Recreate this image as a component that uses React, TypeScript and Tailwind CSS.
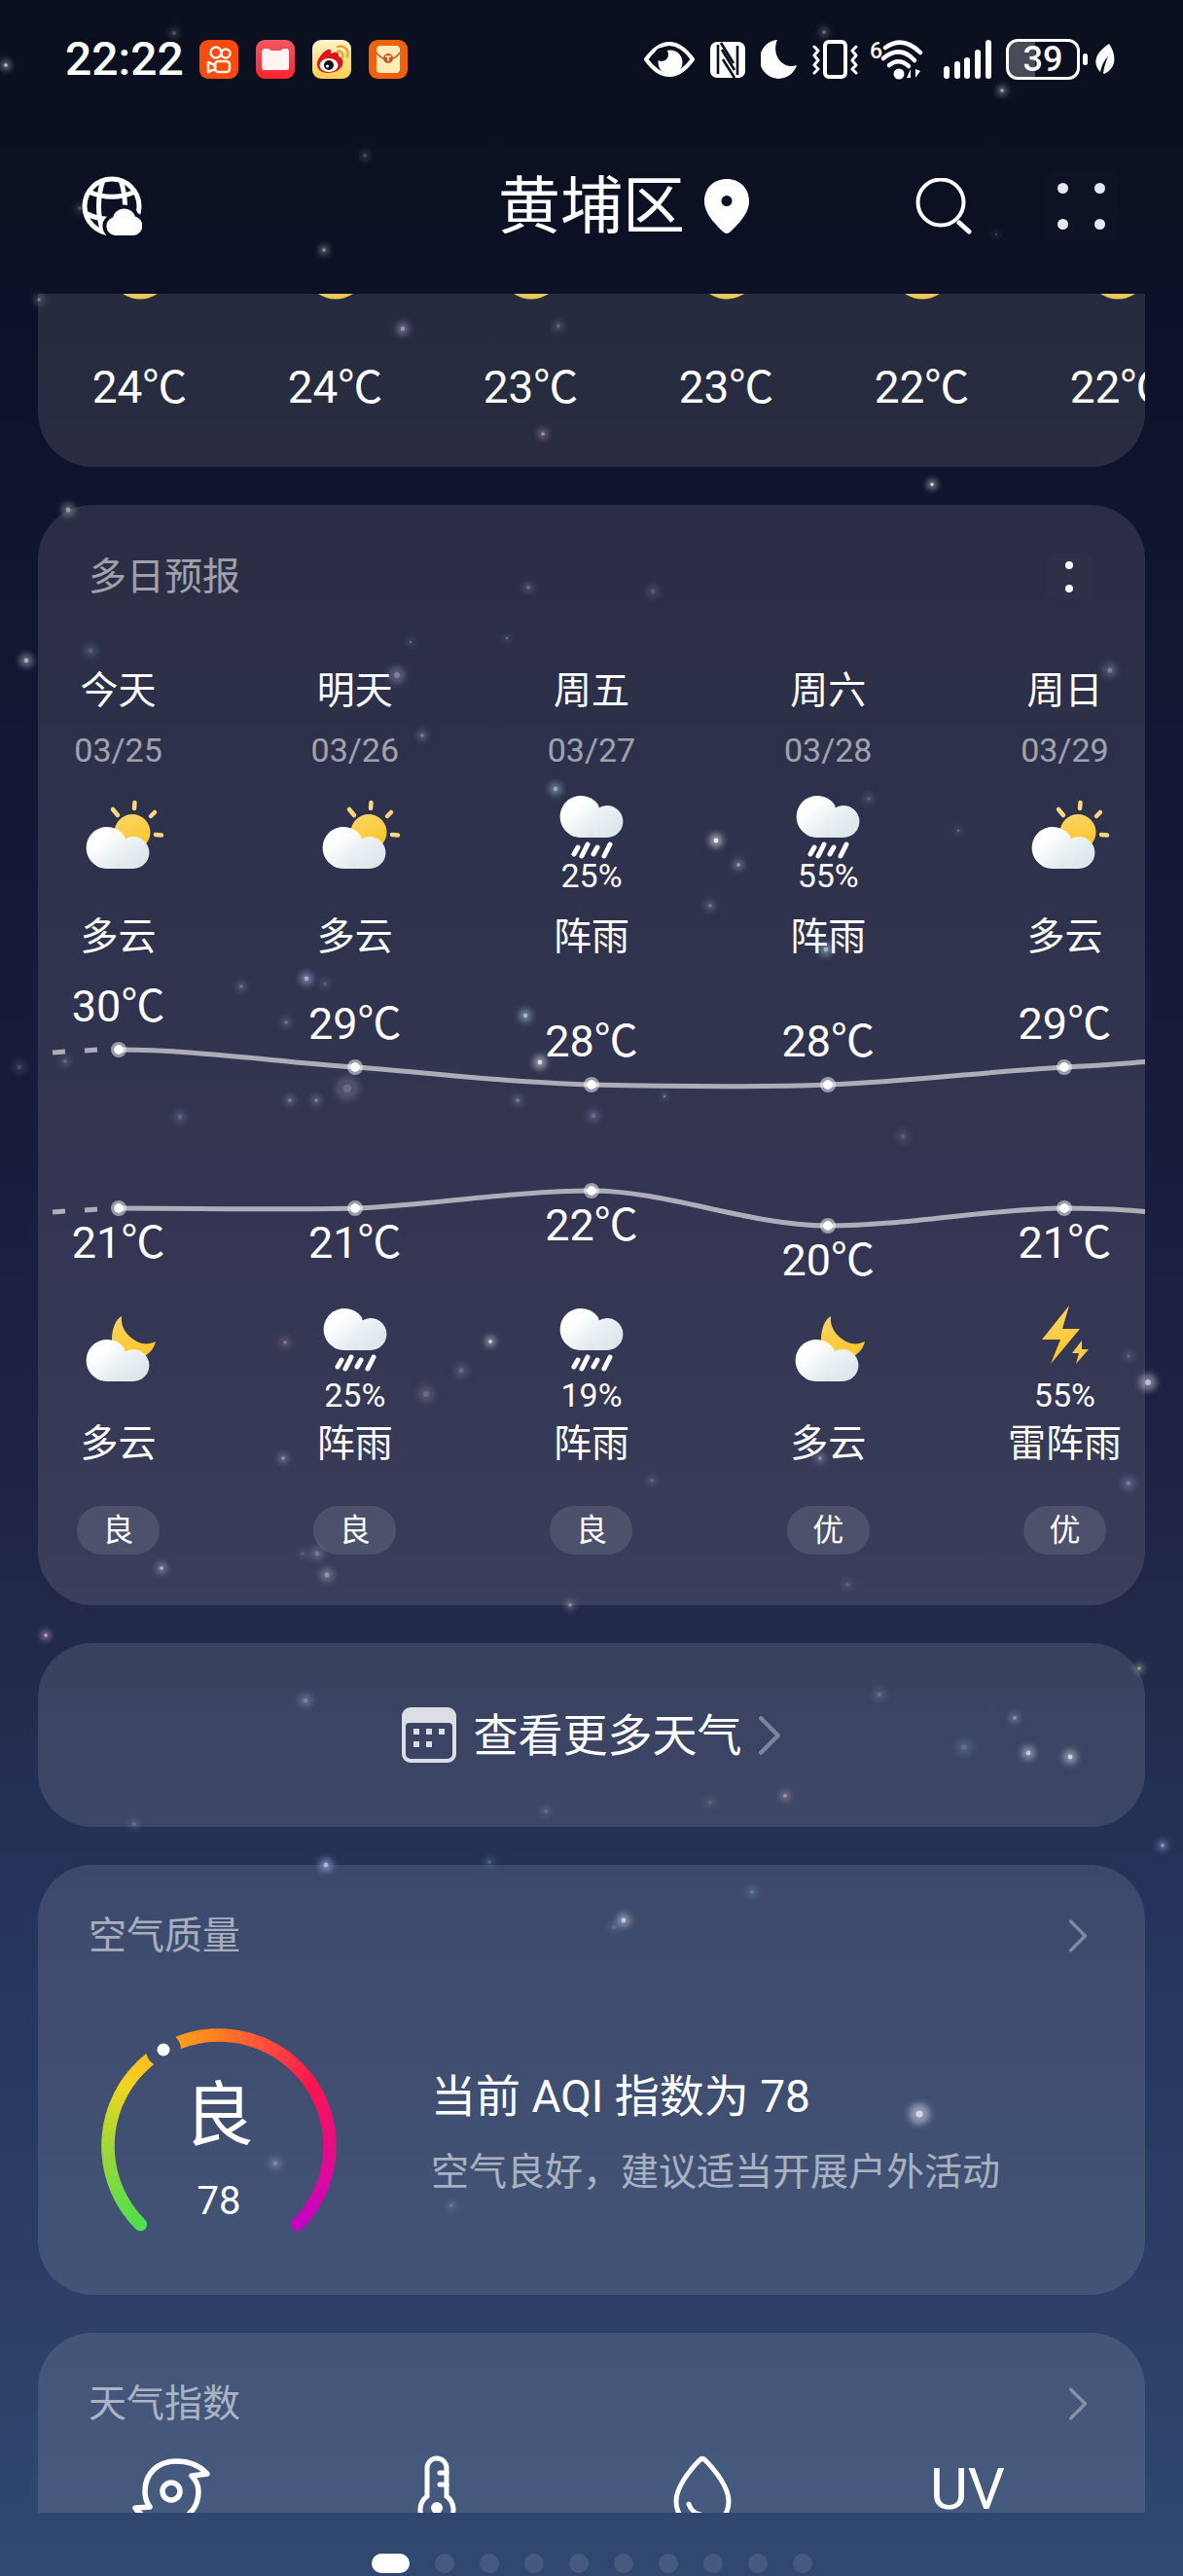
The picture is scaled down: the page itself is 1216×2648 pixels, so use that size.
import { ReactNode } from 'react';

type Weather = 'cloudy-day' | 'cloudy-night' | 'shower' | 'thunder';

interface Period {
  weather: Weather;
  label: string;
  chance?: string;
}

interface Day {
  name: string;
  date: string;
  day: Period;
  night: Period;
  high: number;
  low: number;
  air: string;
}

const hourly = [24, 24, 23, 23, 22, 22];

const days: Day[] = [
  {
    name: '今天',
    date: '03/25',
    day: { weather: 'cloudy-day', label: '多云' },
    night: { weather: 'cloudy-night', label: '多云' },
    high: 30,
    low: 21,
    air: '良',
  },
  {
    name: '明天',
    date: '03/26',
    day: { weather: 'cloudy-day', label: '多云' },
    night: { weather: 'shower', label: '阵雨', chance: '25%' },
    high: 29,
    low: 21,
    air: '良',
  },
  {
    name: '周五',
    date: '03/27',
    day: { weather: 'shower', label: '阵雨', chance: '25%' },
    night: { weather: 'shower', label: '阵雨', chance: '19%' },
    high: 28,
    low: 22,
    air: '良',
  },
  {
    name: '周六',
    date: '03/28',
    day: { weather: 'shower', label: '阵雨', chance: '55%' },
    night: { weather: 'cloudy-night', label: '多云' },
    high: 28,
    low: 20,
    air: '优',
  },
  {
    name: '周日',
    date: '03/29',
    day: { weather: 'cloudy-day', label: '多云' },
    night: { weather: 'thunder', label: '雷阵雨', chance: '55%' },
    high: 29,
    low: 21,
    air: '优',
  },
];

// y of a temperature inside the chart, 18px for each degree
const highY = (t: number) => 79 + (30 - t) * 18;
const lowY = (t: number) => 242 + (21 - t) * 18;

// x, y, core radius, opacity, colour
const stars: [number, number, number, number, string][] = [
  [6, 67, 3, 0.8, '#fff'],
  [179, 34, 3, 0.4, '#cde'],
  [375, 160, 3, 0.35, '#cde'],
  [333, 257, 3, 0.6, '#fff'],
  [82, 214, 3, 0.3, '#fff'],
  [847, 33, 3, 0.5, '#dde'],
  [1030, 93, 3, 0.7, '#fff'],
  [1024, 241, 2, 0.3, '#cde'],
  [40, 308, 3, 0.5, '#cde'],
  [414, 338, 4, 0.7, '#c9c0f5'],
  [574, 335, 3, 0.4, '#cde'],
  [558, 446, 3, 0.7, '#f0c4c8'],
  [958, 498, 3, 0.9, '#fff'],
  [70, 524, 4, 0.6, '#fff'],
  [543, 604, 3, 0.4, '#cde'],
  [671, 608, 4, 0.25, '#cde'],
  [27, 679, 4, 0.7, '#fff'],
  [93, 669, 4, 0.35, '#9cc'],
  [422, 660, 2, 0.4, '#cde'],
  [521, 656, 2, 0.4, '#cde'],
  [408, 694, 5, 0.6, '#bdb4ea'],
  [434, 756, 3, 0.5, '#cde'],
  [571, 811, 4, 0.8, '#9fd0da'],
  [248, 1014, 3, 0.5, '#9cc'],
  [315, 1006, 4, 0.9, '#b9b2f0'],
  [334, 1011, 3, 0.3, '#cde'],
  [294, 1051, 3, 0.4, '#cde'],
  [540, 1044, 4, 0.9, '#9fd0da'],
  [555, 1092, 4, 0.9, '#fff'],
  [67, 1091, 3, 0.35, '#cde'],
  [20, 1097, 4, 0.25, '#cde'],
  [357, 1119, 7, 0.35, '#dde'],
  [298, 1131, 3, 0.5, '#cde'],
  [325, 1131, 3, 0.5, '#cde'],
  [532, 1131, 3, 0.5, '#cde'],
  [185, 1148, 4, 0.4, '#9bd'],
  [1141, 689, 4, 0.5, '#cde'],
  [736, 864, 4, 1, '#fff'],
  [759, 889, 3, 0.6, '#fff'],
  [730, 931, 3, 0.5, '#cde'],
  [893, 821, 3, 0.4, '#9bd'],
  [985, 854, 2, 0.4, '#cde'],
  [849, 976, 4, 0.9, '#9fd0da'],
  [683, 1127, 2, 0.5, '#cde'],
  [610, 1147, 4, 0.4, '#cbe'],
  [928, 1168, 4, 0.25, '#cde'],
  [293, 1380, 3, 0.5, '#ebc'],
  [504, 1379, 3, 0.9, '#fff'],
  [474, 1409, 4, 0.4, '#9bd'],
  [438, 1433, 5, 0.4, '#caa8c0'],
  [291, 1499, 3, 0.6, '#dde'],
  [311, 1597, 3, 0.3, '#8b9'],
  [326, 1597, 4, 0.5, '#b9b2f0'],
  [166, 1612, 3, 0.8, '#dde'],
  [336, 1619, 4, 0.6, '#dde'],
  [586, 1650, 3, 0.6, '#dde'],
  [47, 1681, 3, 0.9, '#f3b8dc'],
  [1160, 1394, 3, 0.3, '#cde'],
  [1180, 1421, 5, 0.9, '#dde'],
  [843, 1499, 3, 0.6, '#dde'],
  [1160, 1525, 4, 0.5, '#b9b2f0'],
  [670, 1522, 3, 0.3, '#cde'],
  [871, 1629, 3, 0.3, '#9cc'],
  [1171, 1715, 3, 0.8, '#a9d9a9'],
  [314, 1748, 4, 0.6, '#9bd'],
  [904, 1742, 4, 0.35, '#9bd'],
  [1043, 1766, 3, 0.6, '#cde'],
  [991, 1796, 5, 0.35, '#9bd'],
  [1057, 1802, 4, 0.9, '#dde'],
  [1100, 1806, 4, 1, '#dde'],
  [807, 1846, 3, 0.7, '#f0c4c8'],
  [730, 1853, 3, 0.3, '#db9'],
  [561, 1862, 3, 0.3, '#cde'],
  [138, 1875, 3, 0.3, '#cde'],
  [1195, 1897, 3, 0.8, '#b8c8ff'],
  [335, 1917, 4, 0.9, '#c4c8ff'],
  [503, 1914, 3, 0.4, '#9bd'],
  [773, 1945, 3, 0.5, '#9cc'],
  [641, 1974, 4, 0.9, '#dde'],
  [631, 1981, 3, 0.4, '#9bd'],
  [945, 2173, 6, 1, '#dde'],
  [283, 2224, 4, 0.4, '#dde'],
  [464, 2267, 3, 0.3, '#cde'],
];

// position on the AQI arc (degrees from its start) and colour
const aqiStops: [number, number[]][] = [
  [0, [80, 222, 80]],
  [45, [165, 215, 54]],
  [75, [240, 214, 32]],
  [97, [255, 186, 34]],
  [118, [255, 150, 34]],
  [136, [255, 120, 34]],
  [162, [255, 70, 64]],
  [190, [255, 20, 80]],
  [215, [236, 14, 120]],
  [245, [214, 10, 165]],
  [270, [196, 0, 200]],
];

function aqiColor(deg: number) {
  let i = 0;
  while (i < aqiStops.length - 2 && deg > aqiStops[i + 1][0]) i++;
  const [a, from] = aqiStops[i];
  const [b, to] = aqiStops[i + 1];
  const k = Math.min(1, (deg - a) / (b - a));
  return `rgb(${from.map((c, n) => Math.round(c + (to[n] - c) * k)).join(',')})`;
}

function aqiPoint(deg: number) {
  const rad = ((135 + deg) * Math.PI) / 180;
  return `${122 + 114 * Math.cos(rad)} ${122 + 114 * Math.sin(rad)}`;
}

function StarField() {
  return (
    <svg
      className="pointer-events-none absolute inset-0 h-full w-full"
      viewBox="0 0 1216 2648"
      preserveAspectRatio="xMidYMin slice"
      aria-hidden="true"
    >
      <defs>
        <filter id="halo" x="-100%" y="-100%" width="300%" height="300%">
          <feGaussianBlur stdDeviation="3" />
        </filter>
      </defs>
      {stars.map(([x, y, r, opacity, color]) => (
        <g key={`${x}-${y}`} opacity={opacity} fill={color}>
          <circle cx={x} cy={y} r={r * 1.8} opacity="0.5" filter="url(#halo)" />
          <circle cx={x} cy={y} r={r * 0.6} opacity="0.85" />
        </g>
      ))}
    </svg>
  );
}

function AppBadges() {
  return (
    <div className="flex gap-[18px]">
      <svg className="h-10 w-10" viewBox="0 0 40 40">
        <rect width="40" height="40" rx="9" fill="#fa4b0e" />
        <g fill="none" stroke="#fff3e4" strokeWidth="2.6">
          <circle cx="17" cy="13" r="5.5" />
          <circle cx="27" cy="14" r="4.5" />
          <rect x="16" y="22" width="15" height="11" rx="3.5" />
          <path d="M9 23l7 3v4l-7 3z" strokeLinejoin="round" />
        </g>
      </svg>
      <svg className="h-10 w-10" viewBox="0 0 40 40">
        <defs>
          <linearGradient id="red" x2="0" y2="1">
            <stop stopColor="#f4575f" />
            <stop offset="1" stopColor="#f8252f" />
          </linearGradient>
        </defs>
        <rect width="40" height="40" rx="9" fill="url(#red)" />
        <path
          d="M8 9h5l3 2h9l3-2h5l1 3v17q0 2-3 2H9q-3 0-3-3V12z"
          fill="#fff3f3"
        />
      </svg>
      <svg className="h-10 w-10" viewBox="0 0 40 40">
        <defs>
          <linearGradient id="gold" x2="0" y2="1">
            <stop stopColor="#fdf3cf" />
            <stop offset="1" stopColor="#fbcf48" />
          </linearGradient>
        </defs>
        <rect width="40" height="40" rx="9" fill="url(#gold)" />
        <path
          d="M5 25c0-6 7-14 11-15 3-1 4 1 3 4 5-2 9-2 8 3 5 2 5 6 4 9-2 5-9 8-15 8-7 0-11-4-11-9z"
          fill="#d8161c"
        />
        <ellipse cx="17" cy="26" rx="9.5" ry="7" fill="#fff" />
        <circle cx="17" cy="26" r="5" fill="#111" />
        <circle cx="15.5" cy="27" r="1.6" fill="#fff" />
        <path
          d="M26 12c4-1 6 2 5 6M26 7c8-2 12 4 10 10"
          fill="none"
          stroke="#eda32c"
          strokeWidth="2.4"
          strokeLinecap="round"
        />
      </svg>
      <svg className="h-10 w-10" viewBox="0 0 40 40">
        <rect width="40" height="40" rx="9" fill="#f0600f" />
        <rect x="8" y="6" width="24" height="28" rx="4" fill="#fdebb8" />
        <path
          d="M8 13c4 6 8 7 12 7s8-1 12-7"
          fill="none"
          stroke="#b5672c"
          strokeWidth="1.5"
        />
        <circle cx="20" cy="19" r="5" fill="#c2562a" />
        <path d="M17 17h6M20 17v5" stroke="#fdebb8" strokeWidth="1.5" />
      </svg>
    </div>
  );
}

function StatusBar() {
  return (
    <div className="flex h-[122px] items-center pr-[70px] pl-[67px]">
      <time className="text-[48px] leading-[60px] font-medium">22:22</time>
      <div className="ml-4">
        <AppBadges />
      </div>
      <div className="ml-auto flex items-center">
        <svg className="h-9 w-[52px]" viewBox="0 0 52 36">
          <path
            d="M2 18C10 7 18 2 26 2s16 5 24 16C42 29 34 34 26 34S10 29 2 18z"
            fill="none"
            stroke="#fff"
            strokeWidth="4"
          />
          <circle cx="27" cy="21" r="12.5" fill="#fff" />
          <circle cx="18" cy="13" r="7" fill="#0a0f1f" />
        </svg>
        <svg className="ml-4 h-[37px] w-9" viewBox="0 0 36 37">
          <rect width="36" height="37" rx="7" fill="#fff" />
          <path
            d="M8 33L8 3M28 34L28 4M12 8L25 29M13 18L25 37M11 1L24 22"
            fill="none"
            stroke="#0a0f1f"
            strokeWidth="2.6"
          />
        </svg>
        <svg className="ml-4 h-10 w-[37px]" viewBox="0 0 37 40">
          <path d="M17 0A19.5 20 0 1 0 37 26C24 31 10 17 17 0z" fill="#fff" />
        </svg>
        <svg
          className="ml-4 h-10 w-[47px]"
          viewBox="0 0 47 40"
          fill="none"
          stroke="#fff"
        >
          <rect x="13" y="2" width="21" height="36" rx="4" strokeWidth="4" />
          <path
            d="M2 7l4 4-4 5 4 5-4 5 4 4-4 4M45 7l-4 4 4 5-4 5 4 5-4 4 4 4"
            strokeWidth="3"
            strokeLinecap="round"
            strokeLinejoin="round"
          />
        </svg>
        <svg className="ml-3 h-[42px] w-14" viewBox="0 0 56 42">
          <text x="0" y="20" fontSize="23" fontWeight="500" fill="#fff">
            6
          </text>
          <g
            fill="none"
            stroke="#fff"
            strokeWidth="4.5"
            strokeLinecap="round"
          >
            <path d="M16 9q18-13 36 5" />
            <path d="M14 20q17-14 32 2" />
            <path d="M20 27q10-8 20 1" />
          </g>
          <circle cx="30" cy="36" r="5.5" fill="#fff" />
          <path d="M42 31v9h-4zM47 40v-9l5 2zM45 31v9" fill="#fff" />
        </svg>
        <svg className="ml-5 h-10 w-[49px]" viewBox="0 0 49 40" fill="#fff">
          <rect x="0" y="27" width="6" height="13" rx="3" />
          <rect x="11" y="22" width="6" height="18" rx="3" />
          <rect x="21" y="18" width="6" height="22" rx="3" />
          <rect x="32" y="10" width="6" height="30" rx="3" />
          <rect x="43" y="0" width="6" height="40" rx="3" />
        </svg>
        <div className="relative ml-[15px] h-[42px] w-[76px] overflow-hidden rounded-xl border-3 border-white text-center text-[36px] leading-[37px] font-medium">
          <div className="absolute inset-y-0 left-0 w-[39%] bg-white/25" />
          <span className="relative">39</span>
        </div>
        <div className="ml-[3px] h-3 w-[5px] rounded-sm bg-white" />
        <svg className="ml-2 h-8 w-5" viewBox="0 0 20 32">
          <path
            d="M14 0c7 10 9 24-5 31l-1-1c1-7 3-12 5-17C9 17 6 23 5 29-3 20-1 10 14 0z"
            fill="#fff"
          />
        </svg>
      </div>
    </div>
  );
}

function TitleBar() {
  return (
    <header className="grid h-[180px] grid-cols-[1fr_auto_1fr] items-center px-[67px]">
      <button type="button" aria-label="天气地图" className="ml-[17px] w-[62px]">
        <svg className="h-[62px] w-[62px]" viewBox="0 0 62 62">
          <g fill="none" stroke="#fff" strokeWidth="5">
            <circle cx="31" cy="31" r="28" />
            <path d="M22 4c-6 18-6 36 0 54M40 4c6 18 6 36 0 54M7 16c16 7 32 7 48 0M4 38c10 6 20 7 30 6" />
          </g>
          <path
            d="M34 61a9.5 9.5 0 0 1-2-18.5 12 12 0 0 1 23-1A10 10 0 0 1 54 61z"
            fill="#fff"
            stroke="#0b1022"
            strokeWidth="8"
            paintOrder="stroke"
          />
        </svg>
      </button>
      <h1 className="pt-[2px] text-[64px] leading-[76px]">黄埔区</h1>
      <div className="flex items-center">
        <svg className="ml-5 h-14 w-[46px]" viewBox="0 0 46 56">
          <path
            fillRule="evenodd"
            d="M23 0C10 0 0 9 0 23c0 13 12 24 19 31q4 4 8 0c7-7 19-18 19-31C46 9 36 0 23 0zm0 17a5.5 5.5 0 1 1 0 11 5.5 5.5 0 0 1 0-11z"
            fill="#fff"
          />
        </svg>
        <button type="button" aria-label="搜索" className="ml-auto">
          <svg
            className="h-[58px] w-[58px]"
            viewBox="0 0 58 58"
            fill="none"
            stroke="#fff"
            strokeWidth="4"
            strokeLinecap="round"
          >
            <circle cx="26" cy="25" r="23.5" />
            <path d="M45 46l10 9" strokeWidth="5" />
          </svg>
        </button>
        <button
          type="button"
          aria-label="更多"
          className="ml-[74px] grid h-[76px] w-[76px] grid-cols-2 place-content-center justify-items-center gap-x-0 gap-y-[26px] rounded-lg bg-white/[0.01]"
        >
          <span className="h-[11px] w-[11px] rounded-full bg-[#e6e8f0]" />
          <span className="h-[11px] w-[11px] rounded-full bg-[#e6e8f0]" />
          <span className="h-[11px] w-[11px] rounded-full bg-[#e6e8f0]" />
          <span className="h-[11px] w-[11px] rounded-full bg-[#e6e8f0]" />
        </button>
      </div>
    </header>
  );
}

function Cloud() {
  return (
    <>
      <path
        d="M36 81a21.5 21.5 0 1 1 18-33.5L63 81z"
        fill="url(#cloud-left)"
      />
      <path
        d="M50 81L47 60a16.500 16.500 0 1 1 16 21z"
        fill="url(#cloud-right)"
      />
    </>
  );
}

function WeatherIcon({ weather }: { weather: Weather }) {
  if (weather === 'shower') {
    return (
      <svg className="h-[74px] w-24" viewBox="0 0 96 74">
        <g transform="translate(1 -32)">
          <Cloud />
        </g>
        <path
          d="M34 59l-4 7M44 56l-6 12M54 59l-4 7M67 56l-6 12"
          stroke="#fff"
          strokeWidth="5"
          strokeLinecap="round"
        />
      </svg>
    );
  }
  if (weather === 'thunder') {
    return (
      <svg className="h-[74px] w-24" viewBox="0 0 96 74" fill="url(#sun)">
        <path d="M53 3L25 38h19L34 63l30-36H46z" />
        <path d="M66 39L56 52h7l-3 11 13-15h-7z" />
      </svg>
    );
  }
  return (
    <svg className="h-[84px] w-24" viewBox="0 0 96 84">
      {weather === 'cloudy-day' ? (
        <>
          <circle cx="62" cy="43.5" r="18.5" fill="url(#sun)" />
          <path
            d="M64.5 13l-.5 6M42 20l5 6M85 23l-4 4M86 46l6 .5"
            stroke="#f8d77e"
            strokeWidth="4.5"
            strokeLinecap="round"
          />
        </>
      ) : (
        <path
          d="M51 14c-6 3-10 13-10 24 0 14 11 22 25 20 12-2 18-10 20-18-8 4-17 3-24-3-8-6-12-14-11-23z"
          fill="url(#sun)"
        />
      )}
      <Cloud />
    </svg>
  );
}

// gradients shared by all weather icons
function IconDefs() {
  return (
    <svg className="absolute h-0 w-0" aria-hidden="true">
      <defs>
        <linearGradient id="cloud-left" x2="1" y2="1">
          <stop offset="0.3" stopColor="#ffffff" />
          <stop offset="1" stopColor="#d3e1e6" />
        </linearGradient>
        <linearGradient id="cloud-right" x2="0.8" y2="1">
          <stop stopColor="#f3f6f8" />
          <stop offset="1" stopColor="#d8e5ea" />
        </linearGradient>
        <linearGradient id="sun" x2="0.3" y2="1">
          <stop stopColor="#f8d668" />
          <stop offset="1" stopColor="#ffc629" />
        </linearGradient>
      </defs>
    </svg>
  );
}

function Chevron({ className }: { className: string }) {
  return (
    <svg
      className={className}
      viewBox="0 0 24 40"
      fill="none"
      stroke="#fff"
      strokeOpacity="0.35"
      strokeWidth="4"
      strokeLinecap="round"
      strokeLinejoin="round"
    >
      <path d="M3 3l17 17L3 37" />
    </svg>
  );
}

function CardHeader({ title, children }: { title: string; children: ReactNode }) {
  return (
    <div className="flex h-14 items-center justify-between pr-[54px] pl-[52px]">
      <h2 className="text-[39px] leading-[56px] text-white/55">{title}</h2>
      {children}
    </div>
  );
}

function HourlyCard() {
  return (
    <section className="overflow-hidden rounded-b-[56px] bg-white/[0.11] pb-[54px]">
      <ul className="flex pl-1">
        {hourly.map((temp, i) => (
          <li key={i} className="flex w-[201px] shrink-0 flex-col items-center">
            <svg className="h-[6px] w-9" viewBox="0 0 36 6">
              <path d="M0 0Q18 11 36 0z" fill="#ecc858" />
            </svg>
            <span className="mt-[62px] text-[46px] leading-[56px]">{temp}℃</span>
          </li>
        ))}
      </ul>
    </section>
  );
}

function TemperatureChart() {
  return (
    <div className="relative mt-[13px] h-[330px]">
      <svg
        className="absolute inset-0 h-full w-full"
        viewBox="0 0 1216 330"
        preserveAspectRatio="none"
        fill="none"
        stroke="#fff"
        strokeOpacity="0.6"
        strokeWidth="5"
      >
        <path d="M54 82l13-1M87 80l13-1" />
        <path d="M122 79C200 79 280 91 365 97S520 113 608 115S770 118 851 115S1020 101 1094 97S1150 93 1216 89" />
        <path d="M54 246l13-1M87 244l13-1" />
        <path d="M122 242C200 242 300 244 365 242S530 224 608 224S770 260 851 260S1020 242 1094 242S1150 245 1216 248" />
      </svg>
      <div className="relative grid grid-cols-5">
        {days.map((day) => (
          <div
            key={day.date}
            className="flex flex-col items-center text-[45px] leading-[56px]"
            style={{ paddingTop: highY(day.high) - 72 }}
          >
            <span>{day.high}℃</span>
            <span className="mt-2 h-4 w-4 rounded-full border-3 border-white/50 bg-white bg-clip-padding" />
            <span
              className="h-4 w-4 rounded-full border-3 border-white/50 bg-white bg-clip-padding"
              style={{ marginTop: lowY(day.low) - highY(day.high) - 16 }}
            />
            <span>{day.low}℃</span>
          </div>
        ))}
      </div>
    </div>
  );
}

function DailyCard() {
  return (
    <section className="overflow-hidden rounded-[56px] bg-white/[0.11] pt-[46px] pb-[52px]">
      <CardHeader title="多日预报">
        <button
          type="button"
          aria-label="多日预报选项"
          className="flex h-12 w-12 flex-col items-center justify-center gap-4 rounded-lg bg-white/[0.01]"
        >
          <span className="h-2 w-2 rounded-full bg-white" />
          <span className="h-2 w-2 rounded-full bg-white" />
        </button>
      </CardHeader>
      {/* the strip is as wide as the screen and is cut off by the card */}
      <div className="-mx-[39px] mt-[65px]">
        <div className="grid grid-cols-5">
          {days.map((day) => (
            <div
              key={day.date}
              className="flex flex-col items-center text-[39px] leading-[48px]"
            >
              <span>{day.name}</span>
              <span className="mt-[17px] text-[34px] leading-10 text-white/55">
                {day.date}
              </span>
              <div className="mt-[21px] flex h-[102px] flex-col items-center">
                <WeatherIcon weather={day.day.weather} />
                {day.day.chance && (
                  <span className="text-[34px] leading-7">{day.day.chance}</span>
                )}
              </div>
              <span className="mt-[25px]">{day.day.label}</span>
            </div>
          ))}
        </div>
        <TemperatureChart />
        <div className="mt-[9px] grid grid-cols-5">
          {days.map((day) => (
            <div
              key={day.date}
              className="flex flex-col items-center text-[39px] leading-[48px]"
            >
              <div className="flex h-[110px] flex-col items-center">
                <WeatherIcon weather={day.night.weather} />
                {day.night.chance && (
                  <span className="mt-[7px] text-[34px] leading-7">
                    {day.night.chance}
                  </span>
                )}
              </div>
              <span className="mt-[11px]">{day.night.label}</span>
              <span className="mt-10 w-[85px] rounded-full bg-white/[0.11] text-center text-[32px] leading-[50px]">
                {day.air}
              </span>
            </div>
          ))}
        </div>
      </div>
    </section>
  );
}

function MoreWeatherButton() {
  return (
    <button
      type="button"
      className="flex h-[189px] w-full items-center justify-center rounded-[56px] bg-white/[0.11]"
    >
      <svg className="h-[57px] w-14" viewBox="0 0 56 57" fill="#dcdde6">
        <path
          fillRule="evenodd"
          d="M9 0h38a9 9 0 0 1 9 9v39a9 9 0 0 1-9 9H9a9 9 0 0 1-9-9V9a9 9 0 0 1 9-9zM4 20v28a5 5 0 0 0 5 5h38a5 5 0 0 0 5-5V20a4 4 0 0 0-4-4H8a4 4 0 0 0-4 4z"
        />
        <path d="M12 22h6v6h-6zM25 22h6v6h-6zM38 22h6v6h-6zM12 35h6v6h-6zM25 35h6v6h-6z" />
      </svg>
      <span className="mr-4 ml-[18px] text-[46px] leading-[56px]">
        查看更多天气
      </span>
      <Chevron className="h-[42px] w-[25px]" />
    </button>
  );
}

function AirGauge() {
  const segments: number[] = [];
  for (let deg = 0; deg < 270; deg += 3) {
    segments.push(deg);
  }

  return (
    <div className="relative h-[244px] w-[244px]">
      <svg className="absolute inset-0 h-full w-full" viewBox="0 0 244 244">
        <defs>
          <mask id="marker-gap">
            <rect width="244" height="244" fill="#fff" />
            <circle cx="65" cy="23" r="18" fill="#000" />
          </mask>
        </defs>
        <g fill="none" strokeWidth="13.5" mask="url(#marker-gap)">
          {segments.map((deg) => (
            <path
              key={deg}
              d={`M${aqiPoint(deg)}A114 114 0 0 1 ${aqiPoint(Math.min(270, deg + 3.5))}`}
              stroke={aqiColor(deg)}
              strokeLinecap={deg === 0 || deg === 267 ? 'round' : 'butt'}
            />
          ))}
        </g>
        <circle cx="65" cy="23" r="6.5" fill="#fff" />
      </svg>
      <div className="relative flex flex-col items-center pt-[47px]">
        <span className="text-[72px] leading-[88px]">良</span>
        <span className="mt-5 text-[40px] leading-12">78</span>
      </div>
    </div>
  );
}

function AirQualityCard() {
  return (
    <section className="rounded-[56px] bg-white/[0.11] pt-[45px] pb-[31px]">
      <CardHeader title="空气质量">
        <Chevron className="mr-1 h-9 w-[21px]" />
      </CardHeader>
      <div className="mt-[66px] flex pl-16">
        <AirGauge />
        <div className="ml-24 pt-[43px]">
          <p className="text-[46px] leading-[56px]">当前 AQI 指数为 78</p>
          <p className="mt-[22px] text-[39px] leading-[56px] text-white/55">
            空气良好，建议适当开展户外活动
          </p>
        </div>
      </div>
    </section>
  );
}

function IndexCard() {
  return (
    <section className="h-[185px] overflow-hidden rounded-t-[56px] bg-white/[0.11] pt-[45px]">
      <CardHeader title="天气指数">
        <Chevron className="mr-1 h-9 w-[21px]" />
      </CardHeader>
      <div className="mt-6 grid grid-cols-4 justify-items-center pr-[46px]">
        <svg
          className="h-[84px] w-[84px]"
          viewBox="0 0 84 84"
          fill="none"
          stroke="#fff"
          strokeWidth="5.5"
          strokeLinejoin="round"
        >
          <path d="M79 20C70 10 58 7 47 7 28 7 15 20 15 38c0 7 2 12 5 16L5 55c9 12 20 15 31 15 20 0 34-13 34-32 0-7-3-12-7-16z" />
          <circle cx="42" cy="38" r="9" />
        </svg>
        <svg
          className="h-[84px] w-12"
          viewBox="0 0 48 84"
          fill="none"
          stroke="#fff"
          strokeWidth="5"
          strokeLinecap="round"
        >
          <path d="M14 43V14a10 10 0 0 1 20 0v29a17 17 0 1 1-20 0z" />
          <path d="M27 19h7M27 31h7" />
          <circle cx="24" cy="55" r="6" fill="#fff" stroke="none" />
        </svg>
        <svg
          className="h-[84px] w-[68px]"
          viewBox="0 0 68 84"
          fill="none"
          stroke="#fff"
          strokeWidth="5"
          strokeLinecap="round"
        >
          <path d="M31 6q3-3 6 0c10 10 24 28 24 42 0 16-12 26-27 26S7 64 7 48C7 34 21 16 31 6z" />
          <path d="M20 51c2 6 5 9 12 11" />
        </svg>
        <span className="text-[60px] leading-[72px]">UV</span>
      </div>
    </section>
  );
}

function PageDots() {
  return (
    <nav
      aria-label="城市"
      className="flex justify-center gap-[26px] pt-[42px] pb-[2px]"
    >
      <button
        type="button"
        aria-label="城市 1"
        className="h-5 w-[39px] rounded-full bg-white"
      />
      {[2, 3, 4, 5, 6, 7, 8, 9, 10].map((n) => (
        <button
          key={n}
          type="button"
          aria-label={`城市 ${n}`}
          className="h-5 w-5 rounded-full bg-white/10"
        />
      ))}
    </nav>
  );
}

export default function App() {
  return (
    <div className="relative min-h-screen overflow-hidden bg-[linear-gradient(180deg,#0a0f1e_0%,#0b1122_8%,#0d1128_12%,#10142c_20%,#141835_30%,#1a1c3c_45%,#1e2141_55%,#222a4a_64%,#25335a_73%,#2b3f66_88%,#304870_100%)] font-[Roboto,'Noto_Sans_CJK_SC',sans-serif] text-white">
      <StarField />
      <IconDefs />
      <div className="relative">
        <StatusBar />
        <TitleBar />
        <main className="flex flex-col gap-[39px] px-[39px]">
          <HourlyCard />
          <DailyCard />
          <MoreWeatherButton />
          <AirQualityCard />
          <IndexCard />
        </main>
        <PageDots />
      </div>
    </div>
  );
}
